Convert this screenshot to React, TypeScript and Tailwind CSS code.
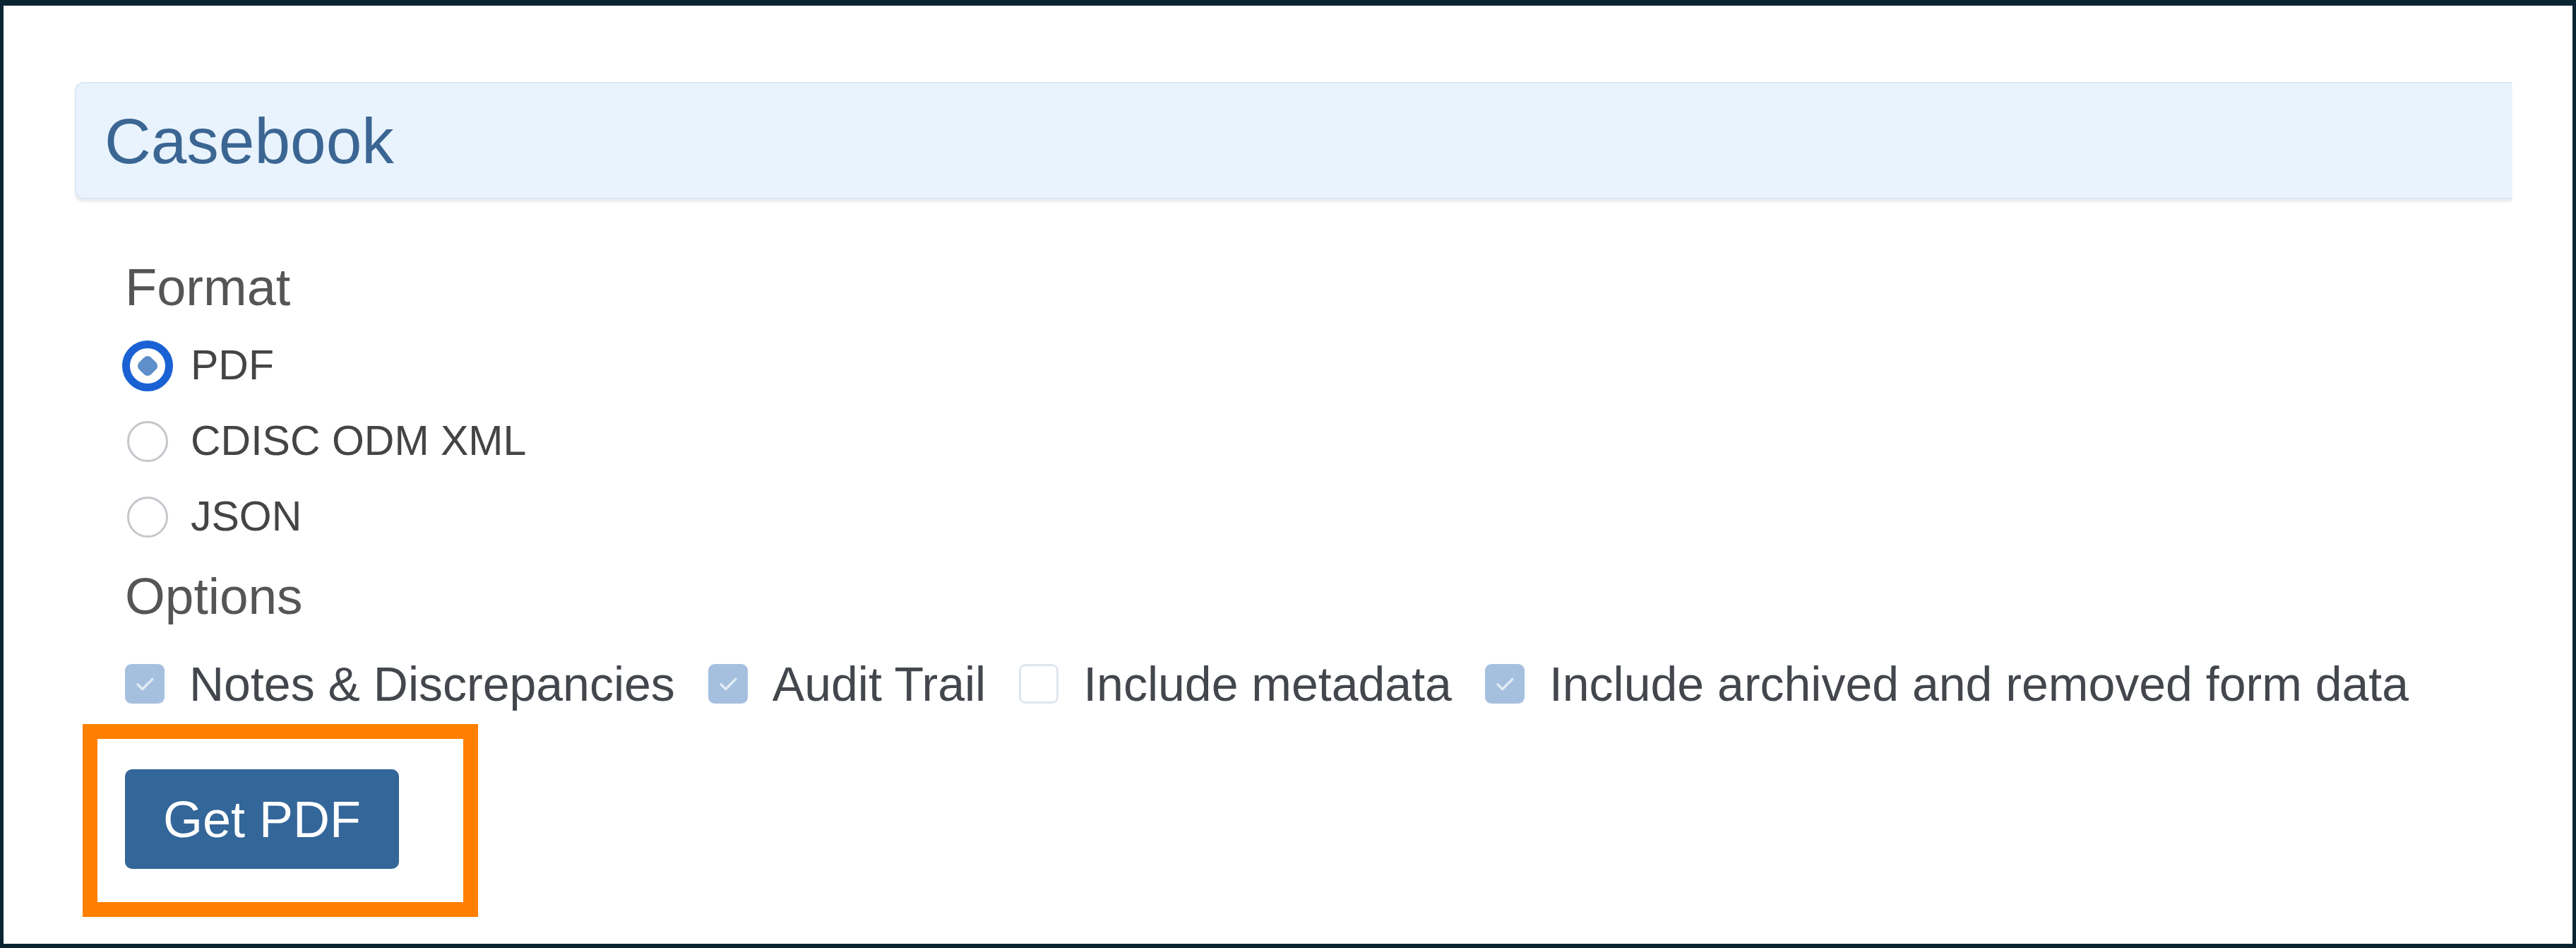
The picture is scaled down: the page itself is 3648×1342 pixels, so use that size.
import React from "react";

const options = [
  { label: "Notes & Discrepancies", checked: true },
  { label: "Audit Trail", checked: true },
  { label: "Include metadata", checked: false },
  { label: "Include archived and removed form data", checked: true },
];

const formats = ["PDF", "CDISC ODM XML", "JSON"];

function Radio({ selected }: { selected: boolean }) {
  if (selected) {
    return (
      <div className="w-[72px] h-[72px] rounded-full border-[11px] border-[#1a62d4] bg-white flex items-center justify-center">
        <div className="w-[24px] h-[24px] rotate-45 rounded-[7px] bg-[#5e8fca]" />
      </div>
    );
  }
  return <div className="w-[58px] h-[58px] rounded-full border-[3px] border-[#c4c7cb] bg-white" />;
}

function Checkbox({ checked }: { checked: boolean }) {
  if (!checked) {
    return <div className="w-[56px] h-[56px] shrink-0 rounded-[9px] border-[3px] border-[#e0e6ed] bg-white" />;
  }
  return (
    <div className="w-[56px] h-[56px] shrink-0 rounded-[9px] bg-[#a5c0df] flex items-center justify-center">
      <svg width="40" height="40" viewBox="0 0 24 24" fill="none">
        <path d="M6 12.5l4 4L18.5 8" stroke="#e3ecf6" strokeWidth="2" strokeLinecap="round" strokeLinejoin="round" />
      </svg>
    </div>
  );
}

export default function App() {
  return (
    <div className="w-[3648px] h-[1342px] bg-[#0b2431] pt-[8px] pl-[5px] pr-[5px] pb-[6px] font-['Liberation_Sans',Arial,sans-serif]">
      <div className="w-full h-full bg-white pt-[108px] pl-[101px] pr-[86px] overflow-hidden">
        {/* Header panel */}
        <div className="h-[166px] rounded-l-[12px] bg-[#e8f3fd] border-2 border-r-0 border-[#dce8f4] shadow-[0_4px_3px_rgba(0,0,0,0.08)] flex items-center pl-[40px]">
          <h1 className="text-[91px] leading-none text-[#3b6693]">Casebook</h1>
        </div>

        <div className="pl-[71px]">
          {/* Format */}
          <div className="mt-[82px] text-[74px] leading-[86px] text-[#555]">Format</div>
          <div className="mt-[14px]">
            {formats.map((f, i) => (
              <div key={f} className="h-[107px] flex items-center">
                <div className="w-[72px] -ml-[4px] flex justify-center">
                  <Radio selected={i === 0} />
                </div>
                <span className="ml-[25px] text-[59px] text-[#444]">{f}</span>
              </div>
            ))}
          </div>

          {/* Options */}
          <div className="mt-[16px] text-[73px] leading-[86px] text-[#555]">Options</div>
          <div className="mt-[36px] h-[90px] flex items-center gap-[47px]">
            {options.map((o) => (
              <div key={o.label} className="flex items-center">
                <Checkbox checked={o.checked} />
                <span className="ml-[35px] text-[68px] text-[#43474d] whitespace-nowrap">{o.label}</span>
              </div>
            ))}
          </div>

          {/* Action */}
          <div className="mt-[76px] relative w-[388px]">
            <button className="w-[388px] h-[141px] rounded-[10px] bg-[#336699] text-white text-[72px] flex items-center justify-center">
              Get PDF
            </button>
            <div className="absolute -left-[60px] -top-[64px] w-[560px] h-[273px] border-[21px] border-[#ff7f00] pointer-events-none" />
          </div>
        </div>
      </div>
    </div>
  );
}
